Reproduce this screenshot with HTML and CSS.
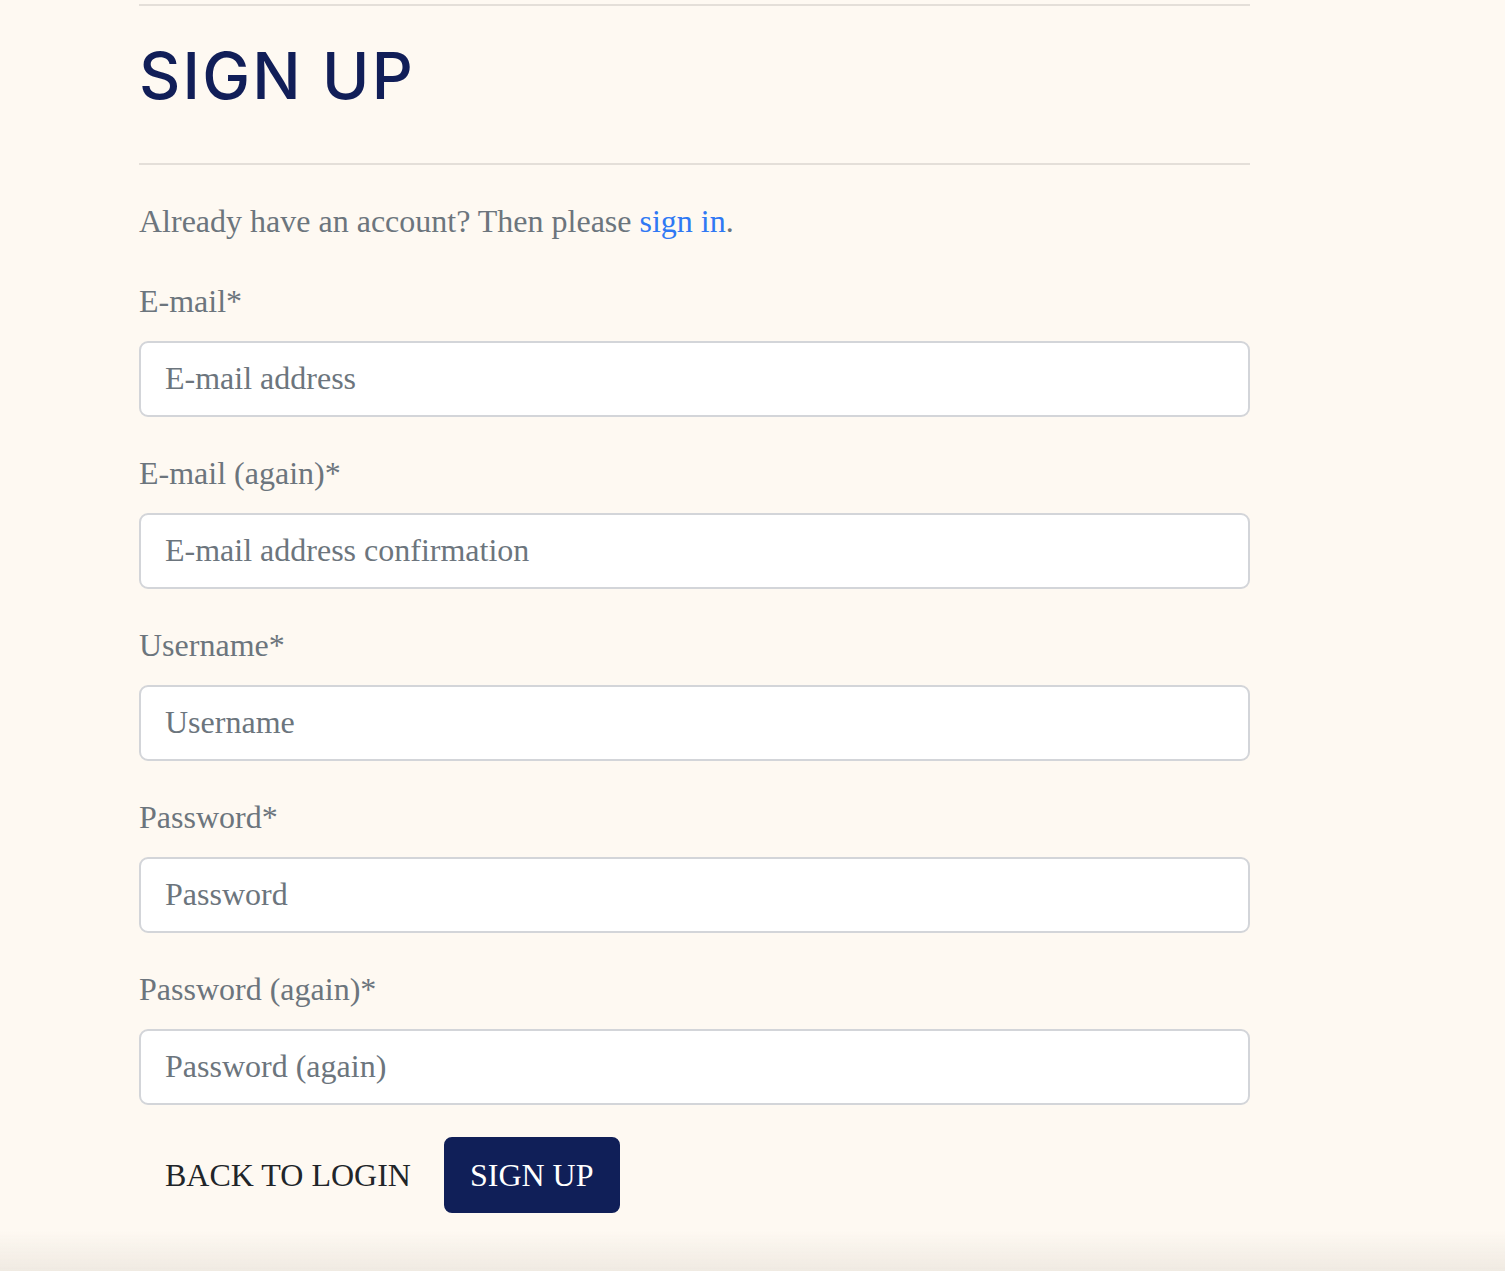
FILE: index.html
```html
<!DOCTYPE html>
<html lang="en">
<head>
<meta charset="utf-8">
<title>Sign Up</title>
<link rel="stylesheet" href="styles.css">
</head>
<body>
<main class="page">
  <hr class="rule rule-top">
  <h1 class="title">SIGN UP</h1>
  <hr class="rule">
  <p class="intro">Already have an account? Then please <a class="link" href="#">sign in</a>.</p>
  <form class="form">
    <div class="group">
      <label class="label" for="email">E-mail*</label>
      <input class="control" id="email" type="email" placeholder="E-mail address">
    </div>
    <div class="group">
      <label class="label" for="email2">E-mail (again)*</label>
      <input class="control" id="email2" type="email" placeholder="E-mail address confirmation">
    </div>
    <div class="group">
      <label class="label" for="username">Username*</label>
      <input class="control" id="username" type="text" placeholder="Username">
    </div>
    <div class="group">
      <label class="label" for="pw">Password*</label>
      <input class="control" id="pw" type="password" placeholder="Password">
    </div>
    <div class="group">
      <label class="label" for="pw2">Password (again)*</label>
      <input class="control" id="pw2" type="password" placeholder="Password (again)">
    </div>
    <div class="actions">
      <a class="btn btn-link" href="#">BACK TO LOGIN</a>
      <button class="btn btn-primary" type="submit">SIGN UP</button>
    </div>
  </form>
</main>
<div class="footer-shade"></div>
</body>
</html>
```
FILE: styles.css
```css
* { box-sizing: border-box; }
html, body { margin: 0; padding: 0; }
body {
  background: #fef9f2;
  font-family: "Liberation Serif", "Times New Roman", serif;
  font-size: 32px;
  line-height: 1.5;
  color: #6c757d;
}
.page {
  width: 1250px;
  padding-left: 139px;
  padding-bottom: 40px;
}
.rule {
  border: 0;
  border-top: 2px solid #e4dfd9;
  margin: 32px 0;
}
.rule-top {
  margin-top: 4px;
}
.title {
  font-family: "Inter", "Noto Sans", sans-serif;
  font-weight: 500;
  font-size: 64px;
  line-height: 1.2;
  color: #111e58;
  margin: 0 0 48px;
  letter-spacing: 2.2px;
}
.intro {
  margin: 0 0 32px;
}
.link {
  color: #2f78f4;
  text-decoration: none;
}
.group {
  margin-bottom: 32px;
}
.label {
  display: block;
  margin-bottom: 16px;
}
.control {
  display: block;
  width: 100%;
  height: 76px;
  padding: 12px 24px;
  font-family: inherit;
  font-size: 32px;
  line-height: 48px;
  color: #495057;
  background: #fff;
  border: 2px solid #d3d5d9;
  border-radius: 9px;
}
.control::placeholder {
  color: #6c757d;
}
.actions {
  display: flex;
  gap: 7px;
}
.btn {
  display: inline-block;
  height: 76px;
  padding: 12px 24px;
  border: 2px solid transparent;
  border-radius: 8px;
  font-family: inherit;
  font-size: 32px;
  line-height: 48px;
  text-decoration: none;
}
.btn-link {
  color: #212529;
  background: transparent;
}
.btn-primary {
  color: #fff;
  background: #101f58;
  border-color: #101f58;
}
.footer-shade {
  position: fixed;
  left: 0;
  right: 0;
  bottom: 0;
  height: 40px;
  background: linear-gradient(to bottom, rgba(240, 234, 226, 0), rgba(238, 232, 224, 0.9));
  pointer-events: none;
}
```
